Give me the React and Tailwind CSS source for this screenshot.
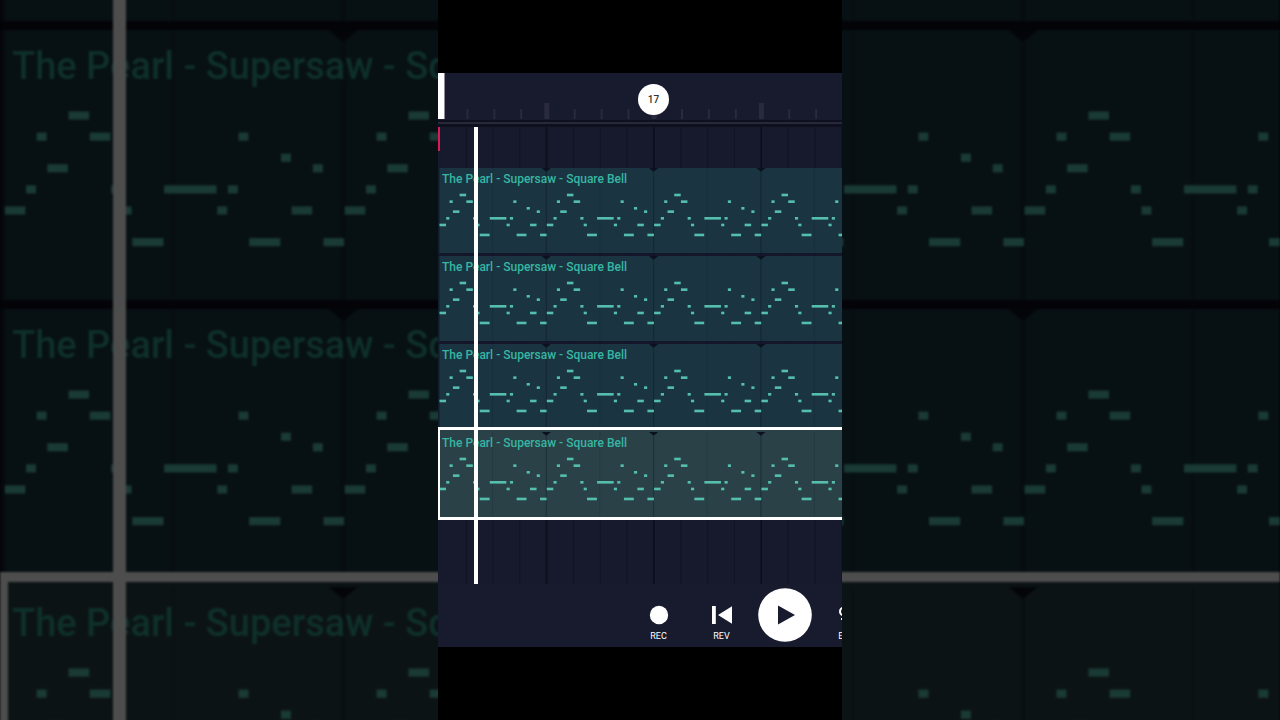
import React, { useState } from "react";

// one bar of the melody: [start, length, row], in 32nd notes
const melody = [
  [0, 2, 9], [2, 1, 7], [3, 1, 2], [4, 2, 5], [6, 2, 0], [8, 2, 2],
  [10, 1, 7], [11, 1, 9], [12, 3, 12], [15, 5, 7], [20, 1, 9], [21, 1, 7],
  [22, 1, 2], [23, 3, 12], [26, 1, 4], [27, 2, 9], [29, 1, 5], [30, 2, 12],
];

const BAR = 107.3;
const STEP = BAR / 32;
const bars = [0, 1, 2, 3];
const tracks = [1, 2, 3, 4];
const clipName = "The Pearl - Supersaw - Square Bell";

const ClipNotes = () => (
  <svg viewBox="0 0 404 85" className="[grid-area:1/1] block w-full" aria-hidden="true">
    <rect width="1.5" height="85" fill="#0c0d1b" opacity="0.6" />
    {bars.map((bar) => (
      <g key={bar} transform={`translate(${1.4 + bar * BAR} 0)`}>
        <rect x={BAR - 1} width="1.2" height="85" fill="#0c1120" opacity="0.35" />
        <rect x={BAR / 2 - 1} width="1" height="85" fill="#0c1120" opacity="0.12" />
        <path d="M-4.6 0h9.2l-4.6 3.8z" transform={`translate(${BAR - 0.4} 0)`} fill="#0c1120" />
        {melody.map(([start, length, row]) => (
          <rect
            key={start}
            x={start * STEP + 0.1}
            y={25.7 + row * 3.33}
            width={length * STEP - 0.2}
            height="2.6"
            fill="#55bfae"
          />
        ))}
      </g>
    ))}
  </svg>
);

const Grid = () => (
  <svg className="absolute inset-0 h-full w-full" aria-hidden="true">
    {bars.map((bar) => (
      <g key={bar}>
        {[1, 2, 3].map((beat) => (
          <rect key={beat} x={bar * BAR + beat * 26.8 + 1} width="1" height="100%" fill="#121425" />
        ))}
        <rect x={(bar + 1) * BAR + 0.5} width="1.5" height="100%" fill="#0d0e1c" />
      </g>
    ))}
  </svg>
);

const Ruler = () => (
  <div className="relative h-[47px] overflow-hidden bg-[#181a2d]">
    <svg className="h-full w-full" aria-hidden="true">
      {bars.map((bar) => (
        <g key={bar} fill="#292a3d">
          {[1, 2, 3].map((beat) => (
            <rect key={beat} x={bar * BAR + beat * 26.9 + 1.5} y="36" width="2" height="10" />
          ))}
          <rect x={(bar + 1) * BAR - 1} y="30" width="5" height="16" />
        </g>
      ))}
      <rect width="6.5" height="46" fill="#fff" />
    </svg>
    {/* bar marker */}
    <span className="absolute top-[11px] left-[200px] flex size-[31px] items-center justify-center rounded-full bg-white text-[10px] font-medium text-[#333]">
      17
    </span>
  </div>
);

const Backdrop = () => (
  <div className="absolute inset-0 overflow-hidden bg-black" aria-hidden="true">
    <div className="relative -mt-62 flex flex-col gap-[9px] bg-[#0c0d1b] opacity-30 blur-[1px]">
      {tracks.map((track) =>
        track === 4 ? (
          <div key={track} className="relative -mt-[15px] grid bg-[#2a4045] pt-[15px] pb-[10px]">
            <ClipNotes />
            <p className="[grid-area:1/1] px-3 pt-3 text-[38px] leading-[48px] font-medium text-[#2f9e8e]">{clipName}</p>
            <span className="absolute inset-0 border-y-10 border-l-8 border-white" />
          </div>
        ) : (
          <div key={track} className="grid bg-[#1a3541]">
            <ClipNotes />
            <p className="[grid-area:1/1] px-3 pt-3 text-[38px] leading-[48px] font-medium text-[#2f9e8e]">{clipName}</p>
          </div>
        )
      )}
      <span className="absolute inset-y-0 left-[113px] w-[13px] bg-white" />
    </div>
  </div>
);

const App = () => {
  const [selected, setSelected] = useState(4);
  const [playing, setPlaying] = useState(false);

  return (
    <div className="relative flex min-h-screen justify-center overflow-hidden bg-black font-[Roboto,sans-serif]">
      <Backdrop />

      <main className="relative flex w-full max-w-101 flex-col justify-center overflow-hidden bg-black">
        <Ruler />
        <div className="h-[7px] border-t-2 border-b-3 border-[#0f101f] bg-[#27283a]" />

        {/* Tracks */}
        <section className="relative bg-[#17192c] pt-[41px] pb-16">
          <Grid />
          <span className="absolute top-0 left-0 h-6 w-[2px] bg-[#d81b55]" />
          <div className="relative flex flex-col gap-[3px] bg-[#14152a]/80">
            {tracks.map((track) => (
              <button
                key={track}
                onClick={() => setSelected(track)}
                className={`relative grid text-left ${
                  track === selected ? "-mt-[5px] bg-[#2a4247] pt-[5px] pb-[3px]" : "bg-[#1a3541]"
                }`}
              >
                <ClipNotes />
                <span className="[grid-area:1/1] px-1 pt-[3px] text-[12px] leading-4 font-medium text-[#37b5a3]">
                  {clipName}
                </span>
                {track === selected && (
                  <span className="absolute inset-0 border-y-3 border-l-2 border-white" />
                )}
              </button>
            ))}
          </div>
          <span className="absolute inset-y-0 left-[36px] w-1 bg-white" />
        </section>

        {/* Transport */}
        <nav className="flex h-[63px] overflow-hidden bg-[#181a2d] pl-[189px] text-[9px] leading-3 text-white">
          <button className="flex w-[63px] shrink-0 flex-col items-center gap-[5px] pt-[21px]">
            <svg viewBox="0 0 20 20" className="size-5" fill="currentColor">
              <circle cx="10" cy="10" r="9.2" />
            </svg>
            REC
          </button>
          <button className="flex w-[63px] shrink-0 flex-col items-center gap-[5px] pt-[21px]">
            <svg viewBox="0 0 20 20" className="size-5" fill="currentColor">
              <path d="M0 1h3.8v18H0zM20.5 1v18L6 10z" />
            </svg>
            REV
          </button>
          <button
            aria-label="Play"
            onClick={() => setPlaying(!playing)}
            className="flex w-[63px] shrink-0 flex-col items-center pt-[4px]"
          >
            <svg viewBox="0 0 54 54" className="size-[54px]">
              <circle cx="27" cy="27" r="26.8" fill="#fff" />
              <path d={playing ? "M19 18h5v18h-5zM30 18h5v18h-5z" : "M20 17.5v19L37 27z"} fill="#181a2d" />
            </svg>
          </button>
          <button className="flex w-[63px] shrink-0 flex-col items-center gap-[5px] pt-[21px]">
            <svg viewBox="0 0 20 20" className="size-5" fill="none" stroke="currentColor" strokeWidth="2">
              <circle cx="6" cy="6.5" r="4" />
              <path d="M3 14h14M10 6h8" />
            </svg>
            EDIT
          </button>
        </nav>
      </main>
    </div>
  );
};

export default App;
